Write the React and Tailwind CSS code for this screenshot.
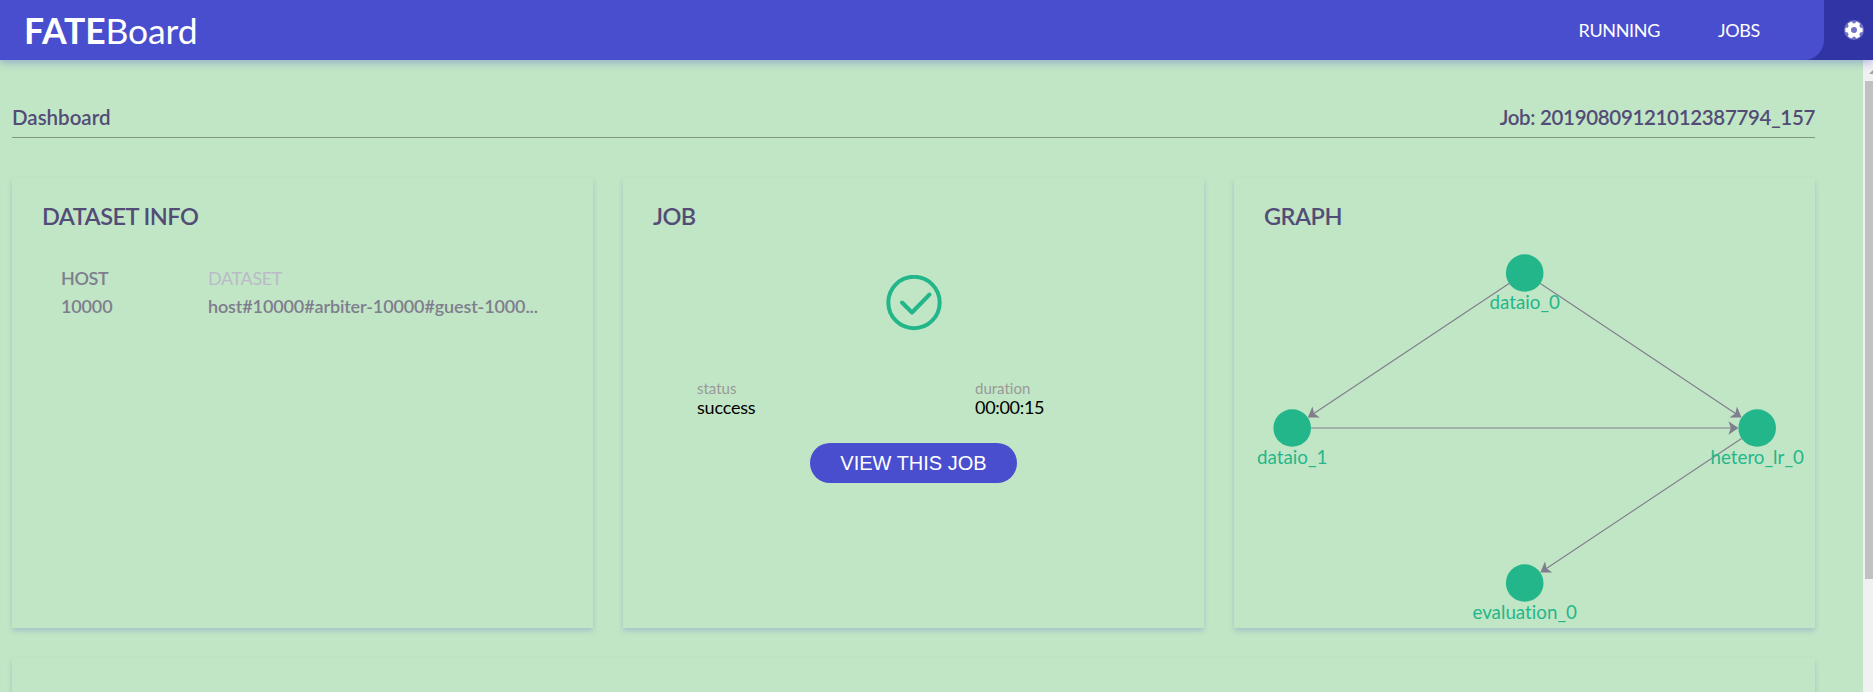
import React from 'react';

const NODES = [
  { id: 'dataio_0', x: 290.7, y: 95 },
  { id: 'dataio_1', x: 58.2, y: 250 },
  { id: 'hetero_lr_0', x: 523.2, y: 250 },
  { id: 'evaluation_0', x: 290.7, y: 405 },
];

const EDGES = [
  [0, 1],
  [0, 2],
  [1, 2],
  [2, 3],
];

const RADIUS = 18.8;

function Edge({ from, to }) {
  const dx = to.x - from.x;
  const dy = to.y - from.y;
  const len = Math.hypot(dx, dy);
  const ux = dx / len;
  const uy = dy / len;
  const x2 = to.x - ux * RADIUS;
  const y2 = to.y - uy * RADIUS;
  const angle = (Math.atan2(dy, dx) * 180) / Math.PI;
  return (
    <g>
      <line x1={from.x + ux * RADIUS} y1={from.y + uy * RADIUS} x2={x2 - ux * 5} y2={y2 - uy * 5} stroke="#7f7d8e" strokeWidth="1.1" />
      <path d="M0 0L-10 -6.67L-7.5 0L-10 6.67Z" fill="#7f7d8e" transform={`translate(${x2} ${y2}) rotate(${angle})`} />
    </g>
  );
}

function Graph() {
  return (
    <svg className="absolute inset-0 h-[450px] w-[581px]" viewBox="0 0 581 450">
      {EDGES.map(([a, b]) => (
        <Edge key={`${a}-${b}`} from={NODES[a]} to={NODES[b]} />
      ))}
      {NODES.map((n) => (
        <g key={n.id} fill="#24b68b">
          <circle cx={n.x} cy={n.y} r={RADIUS} />
          <text x={n.x} y={n.y + 35.5} textAnchor="middle" fontSize="18.8">{n.id}</text>
        </g>
      ))}
    </svg>
  );
}

function Card({ title, children }) {
  return (
    <section className="relative h-[450px] flex-1 px-[30px] pt-[23px] shadow-[0_3px_5px_0_rgba(73,77,206,0.22)]">
      <h2 className="text-[23.5px] leading-[30px] font-semibold tracking-[-0.53px] text-[#534c77]">{title}</h2>
      {children}
    </section>
  );
}

function Header() {
  return (
    <header className="relative flex h-[60px] bg-[#3034a5] text-white shadow-[0_3px_8px_0_rgba(73,77,206,0.35)]">
      <div className="flex h-full w-[1824px] items-center rounded-br-[20px] bg-[#494ece] pl-[24px]">
        <div className="pt-[2px] text-[35.5px] leading-[60px] tracking-[-0.1px]">
          <span className="font-bold">FATE</span>Board
        </div>
        <nav className="ml-auto flex gap-[58px] pr-[64px] text-[18px] tracking-[-0.35px]">
          <a>RUNNING</a>
          <a>JOBS</a>
        </nav>
      </div>
      <svg className="mt-[20px] ml-[20px] size-[20px]" viewBox="0 0 20 20">
        <circle cx="10" cy="10" r="10" fill="#7073c4" />
        <g fill="#fff">
          <circle cx="10" cy="10" r="6.8" />
          <rect x="7.7" y="1.4" width="4.6" height="17.2" rx="0.8" transform="rotate(30 10 10)" />
          <rect x="7.7" y="1.4" width="4.6" height="17.2" rx="0.8" transform="rotate(90 10 10)" />
          <rect x="7.7" y="1.4" width="4.6" height="17.2" rx="0.8" transform="rotate(150 10 10)" />
        </g>
        <circle cx="10" cy="10" r="3" fill="#7073c4" />
      </svg>
    </header>
  );
}

export default function App() {
  return (
    <div className="flex h-[692px] w-[1873px] flex-col overflow-hidden bg-[#c1e6c5] font-['Lato',sans-serif] [font-variant-ligatures:none]">
      <Header />
      <div className="flex min-h-0 flex-1">
        <main className="w-[1863px] shrink-0 pl-[12px]">
          <div className="flex h-[78px] w-[1803px] items-end justify-between border-b border-[#7e9981] pb-[7px] text-[20.5px] leading-[26px] font-semibold text-[#534c77]">
            <span>Dashboard</span>
            <span className="tracking-[-0.33px]">Job: 20190809121012387794_157</span>
          </div>
          <div className="mt-[40px] flex w-[1803px] gap-[30px]">
            <Card title="DATASET INFO">
              <div className="mt-[33px] grid grid-cols-[147px_332px] pl-[19px] text-[18px] leading-[28px] font-semibold text-[#7f7d8e]">
                <span className="tracking-[-0.4px]">HOST</span>
                <span className="font-normal tracking-[-0.35px] text-[#bbbac8]">DATASET</span>
                <span className="tracking-[-0.15px]">10000</span>
                <span className="whitespace-nowrap tracking-[-0.13px]">host#10000#arbiter-10000#guest-1000...</span>
              </div>
            </Card>
            <Card title="JOB">
              <div className="flex flex-col items-center">
                <svg className="mt-[44px] size-[56px]" viewBox="0 0 56 56" fill="none" stroke="#24b68b">
                  <circle cx="28" cy="27.5" r="25.7" strokeWidth="4" />
                  <path d="M16 27.5L26 37.5L43.5 19.5" strokeWidth="4" strokeLinecap="round" strokeLinejoin="round" />
                </svg>
                <div className="mt-[48px] grid w-full grid-cols-[278px_1fr] pl-[44px]">
                  <span className="text-[15px] leading-[18px] text-[#999]">status</span>
                  <span className="text-[15px] leading-[18px] text-[#999]">duration</span>
                  <span className="text-[18px] leading-[20px] tracking-[-0.2px] text-black">success</span>
                  <span className="text-[18px] leading-[20px] tracking-[-0.3px] text-black">00:00:15</span>
                </div>
                <button className="mt-[26px] h-[40px] w-[207px] rounded-full bg-[#494ece] font-['Liberation_Sans',sans-serif] text-[20px] text-white">
                  VIEW THIS JOB
                </button>
              </div>
            </Card>
            <Card title="GRAPH">
              <Graph />
            </Card>
          </div>
          <section className="mt-[30px] h-[80px] w-[1803px] shadow-[0_3px_5px_0_rgba(73,77,206,0.22)]" />
        </main>
        <div className="w-[10px] shrink-0 overflow-hidden bg-[#f1f1f1] pl-[2px]">
          <svg className="h-[21px] w-[8px]" viewBox="0 0 8 21">
            <path d="M4 14L8 10V14Z" fill="#a3a3a3" />
          </svg>
          <div className="h-[498px] bg-[#c1c1c1]" />
        </div>
      </div>
    </div>
  );
}
